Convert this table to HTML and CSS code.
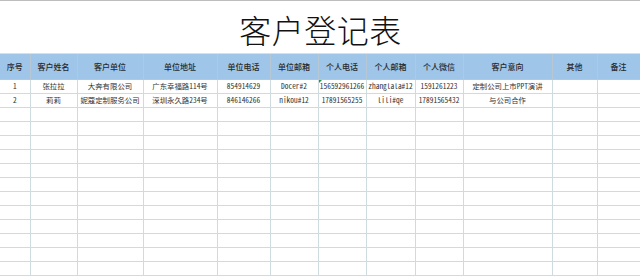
FILE: index.html
```html
<!DOCTYPE html>
<html lang="zh">
<head>
<meta charset="utf-8">
<link rel="stylesheet" href="styles.css">
</head>
<body>
<div class="sheet">
  <div class="title">客户登记表</div>
  <table class="grid">
    <colgroup>
      <col class="c1"><col class="c2"><col class="c3"><col class="c4"><col class="c5"><col class="c6">
      <col class="c7"><col class="c8"><col class="c9"><col class="c10"><col class="c11"><col class="c12">
    </colgroup>
    <thead>
      <tr>
        <th>序号</th><th>客户姓名</th><th>客户单位</th><th>单位地址</th><th>单位电话</th><th>单位邮箱</th>
        <th>个人电话</th><th>个人邮箱</th><th>个人微信</th><th>客户意向</th><th>其他</th><th>备注</th>
      </tr>
    </thead>
    <tbody>
      <tr>
        <td>1</td><td>张拉拉</td><td>大奔有限公司</td><td>广东幸福路114号</td><td>854914629</td><td>Docer#2</td>
        <td class="flag">156592961266</td><td>zhanglala#12</td><td>1591261223</td><td>定制公司上市PPT演讲</td><td></td><td></td>
      </tr>
      <tr>
        <td>2</td><td>莉莉</td><td>妮蔻定制服务公司</td><td>深圳永久路234号</td><td>846146266</td><td>nikou#12</td>
        <td>17891565255</td><td>lili#qe</td><td>17891565432</td><td>与公司合作</td><td></td><td></td>
      </tr>
      <tr><td></td><td></td><td></td><td></td><td></td><td></td><td></td><td></td><td></td><td></td><td></td><td></td></tr>
      <tr><td></td><td></td><td></td><td></td><td></td><td></td><td></td><td></td><td></td><td></td><td></td><td></td></tr>
      <tr><td></td><td></td><td></td><td></td><td></td><td></td><td></td><td></td><td></td><td></td><td></td><td></td></tr>
      <tr><td></td><td></td><td></td><td></td><td></td><td></td><td></td><td></td><td></td><td></td><td></td><td></td></tr>
      <tr><td></td><td></td><td></td><td></td><td></td><td></td><td></td><td></td><td></td><td></td><td></td><td></td></tr>
      <tr><td></td><td></td><td></td><td></td><td></td><td></td><td></td><td></td><td></td><td></td><td></td><td></td></tr>
      <tr><td></td><td></td><td></td><td></td><td></td><td></td><td></td><td></td><td></td><td></td><td></td><td></td></tr>
      <tr><td></td><td></td><td></td><td></td><td></td><td></td><td></td><td></td><td></td><td></td><td></td><td></td></tr>
      <tr><td></td><td></td><td></td><td></td><td></td><td></td><td></td><td></td><td></td><td></td><td></td><td></td></tr>
      <tr><td></td><td></td><td></td><td></td><td></td><td></td><td></td><td></td><td></td><td></td><td></td><td></td></tr>
      <tr><td></td><td></td><td></td><td></td><td></td><td></td><td></td><td></td><td></td><td></td><td></td><td></td></tr>
      <tr><td></td><td></td><td></td><td></td><td></td><td></td><td></td><td></td><td></td><td></td><td></td><td></td></tr>
    </tbody>
  </table>
</div>
</body>
</html>
```

FILE: styles.css
```css
* { box-sizing: border-box; }
html, body {
  margin: 0;
  padding: 0;
  background: #ffffff;
}
body {
  width: 640px;
  height: 277px;
  overflow: hidden;
  font-family: "Noto Sans CJK SC", "Noto Sans", sans-serif;
  color: #222;
}
.sheet {
  border-top: 1px solid #bdbdbd;
}
.title {
  height: 53px;
  border-bottom: 1px solid #d5e2e0;
  display: flex;
  align-items: center;
  justify-content: center;
  font-family: "Noto Sans CJK SC", sans-serif;
  font-weight: 300;
  font-size: 32px;
  line-height: 1;
  padding-top: 4px;
  padding-left: 1px;
  color: #111;
  letter-spacing: 0.5px;
}
.grid {
  border-collapse: collapse;
  table-layout: fixed;
  width: 640px;
}
.c1 { width: 30px; }
.c2 { width: 47px; }
.c3 { width: 66px; }
.c4 { width: 74px; }
.c5 { width: 53px; }
.c6 { width: 48px; }
.c7 { width: 48px; }
.c8 { width: 49px; }
.c9 { width: 48px; }
.c10 { width: 89px; }
.c11 { width: 45px; }
.c12 { width: 43px; }
.grid th {
  height: 25px;
  background: #9fc5e8;
  border: 1px solid #b7c8d4;
  border-top: 0;
  font-weight: 500;
  font-size: 8px;
  color: #2a2a2a;
  padding: 0;
  text-align: center;
  vertical-align: middle;
}
.grid th:first-child, .grid td:first-child { border-left: 0; }
.grid td {
  height: 14px;
  border: 1px solid #cfdcdf;
  font-family: "Noto Sans Mono CJK SC", "Noto Sans CJK SC", monospace;
  font-size: 7.4px;
  line-height: 12px;
  color: #333;
  padding: 0;
  text-align: center;
  vertical-align: middle;
  white-space: nowrap;
  overflow: hidden;
}
.grid td.flag {
  position: relative;
}
.grid td.flag::before {
  content: "";
  position: absolute;
  left: 0;
  top: 0;
  width: 0;
  height: 0;
  border-top: 3px solid #1e9b3a;
  border-right: 3px solid transparent;
}
```
